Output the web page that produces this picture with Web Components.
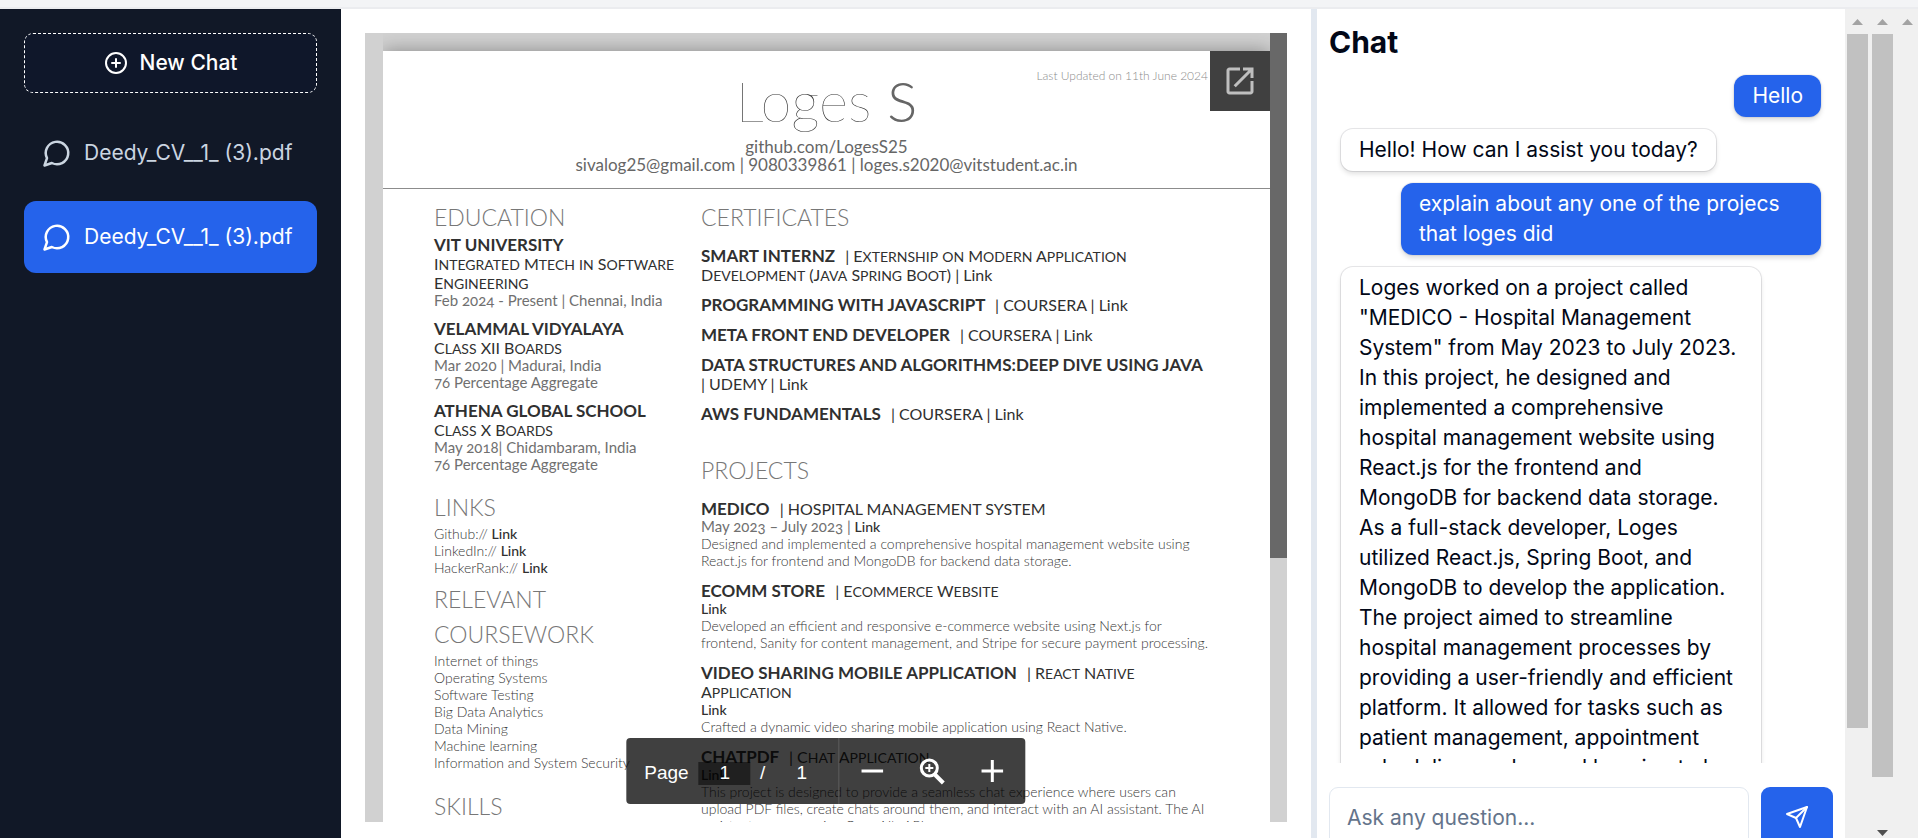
<!DOCTYPE html>
<html lang="en">
<head>
<meta charset="utf-8">
<title>ChatPDF</title>
<meta name="viewport" content="width=device-width, initial-scale=1">
<style>
  html, body { margin: 0; height: 100%; }
  body { overflow: hidden; background: #fff; color: #020817; font: 400 21px/30px Inter, "Liberation Sans", sans-serif; }
</style>
</head>
<body>
<chat-app>
  <chat-sidebar slot="sidebar">
    <chat-link href="#chat-1">Deedy_CV__1_ (3).pdf</chat-link>
    <chat-link href="#chat-2" active>Deedy_CV__1_ (3).pdf</chat-link>
  </chat-sidebar>
  <pdf-viewer slot="viewer" page="1" pages="1"><cv-page></cv-page></pdf-viewer>
  <chat-panel slot="chat">
    <chat-message from="user">Hello</chat-message>
    <chat-message>Hello! How can I assist you today?</chat-message>
    <chat-message from="user">explain about any one of the projecs that loges did</chat-message>
    <chat-message>Loges worked on a project called "MEDICO - Hospital Management System" from May 2023 to July 2023. In this project, he designed and implemented a comprehensive hospital management website using React.js for the frontend and MongoDB for backend data storage. As a full-stack developer, Loges utilized React.js, Spring Boot, and MongoDB to develop the application. The project aimed to streamline hospital management processes by providing a user-friendly and efficient platform. It allowed for tasks such as patient management, appointment scheduling, and record keeping to be</chat-message>
  </chat-panel>
  <scroll-track slot="tracks" style="--thumb: 694px"></scroll-track>
  <scroll-track slot="tracks" style="--thumb: 743px" down></scroll-track>
  <scroll-track slot="tracks" style="--thumb: 0px"></scroll-track>
</chat-app>

<script>
const define = (name, html, setup) => {
  const template = document.createElement('template');
  template.innerHTML = html;
  customElements.define(name, class extends HTMLElement {
    constructor() {
      super();
      this.attachShadow({ mode: 'open' }).append(template.content.cloneNode(true));
    }
    connectedCallback() { if (setup) setup(this, this.shadowRoot); }
  });
};

define('chat-app', `
  <style>
    :host { display: flex; flex-direction: column; height: 100vh; overflow: hidden; }
    .strip { flex: none; height: 7px; background: #f3f4f6; border-bottom: 2px solid #ebecef; }
    main { flex: 1; min-height: 0; display: flex; }
    .sidebar { flex: none; width: 341px; }
    .viewer { flex: 1; min-width: 0; padding: 24px 24px 16px; display: flex; }
    .chat { flex: none; width: 528px; border-left: 6px solid #e2e8f0; overflow: hidden; }
    .tracks { flex: none; width: 73px; display: flex; background: #f0f0f0; overflow: hidden; }
    ::slotted(pdf-viewer) { flex: 1; min-width: 0; }
    ::slotted(chat-sidebar) { height: 100%; }
  </style>
  <div class="strip"></div>
  <main>
    <div class="sidebar"><slot name="sidebar"></slot></div>
    <div class="viewer"><slot name="viewer"></slot></div>
    <div class="chat"><slot name="chat"></slot></div>
    <div class="tracks"><slot name="tracks"></slot></div>
  </main>`);

define('chat-sidebar', `
  <style>
    :host { display: block; box-sizing: border-box; padding: 24px; background: #111827; }
    button { display: flex; align-items: center; justify-content: center; gap: 12px; width: 100%; height: 60px; box-sizing: border-box;
      margin: 0 0 24px; border: 1px dashed #fff; border-radius: 9px; background: #0f172a; color: #fff; font: inherit; font-weight: 500; }
    nav { display: flex; flex-direction: column; gap: 12px; }
  </style>
  <button type="button">
    <svg width="24" height="24" viewBox="0 0 24 24" fill="none" stroke="currentColor" stroke-width="2" stroke-linecap="round" aria-hidden="true"><circle cx="12" cy="12" r="10"/><path d="M8 12h8M12 8v8"/></svg>
    New Chat
  </button>
  <nav aria-label="Chats"><slot></slot></nav>`);

define('chat-link', `
  <style>
    :host { display: block; color: #cbd5e1; border-radius: 12px; }
    :host([active]) { color: #fff; background: #2563eb; }
    a { display: flex; align-items: center; gap: 12px; height: 72px; padding: 0 18px; color: inherit; text-decoration: none; white-space: nowrap; }
    svg { flex: none; }
  </style>
  <a>
    <svg width="30" height="30" viewBox="0 0 24 24" fill="none" stroke="currentColor" stroke-width="2" stroke-linecap="round" stroke-linejoin="round" aria-hidden="true"><path d="M7.9 20A9 9 0 1 0 4 16.1L2 22Z"/></svg>
    <span><slot></slot></span>
  </a>`, (host, root) => { root.querySelector('a').href = host.getAttribute('href'); });

define('pdf-viewer', `
  <style>
    :host { display: flex; position: relative; padding-left: 18px; background: #d1d1d1; }
    .sheet { flex: 1; min-width: 0; padding-top: 18px; overflow: hidden; position: relative; }
    ::slotted(cv-page) { box-shadow: 0 0 18px rgba(0, 0, 0, .35); }
    .bar { flex: none; width: 17px; }
    .thumb { height: 66.6%; background: #686868; }
    .open { position: absolute; top: 18px; right: 17px; width: 60px; height: 60px; display: grid; place-items: center; padding: 0; border: 0; background: #404040; color: #bfbfbf; }
    .tools { position: absolute; bottom: 18px; left: 50%; transform: translateX(-50%); display: flex; height: 66px; border-radius: 4px;
      background: rgba(0, 0, 0, .75); color: #fff; font: 19px/24px "Liberation Sans", Arial, sans-serif; }
    .count { display: flex; align-items: center; padding: 4px 10px 0 18px; box-sizing: border-box; border-right: 1px solid #5c5c5c; }
    input { width: 52px; height: 23px; box-sizing: border-box; margin-left: 10px; padding: 0; border: 0; background: rgba(0, 0, 0, .5); color: #fff; font: inherit; text-align: center; }
    .sep { width: 24px; text-align: center; }
    .total { width: 54px; text-align: center; }
    .zoom { display: flex; justify-content: center; width: 186px; }
    .zoom button { width: 60px; padding: 0; display: grid; place-items: center; border: 0; background: none; color: #fff; }
  </style>
  <div class="sheet"><slot></slot></div>
  <div class="bar"><div class="thumb"></div></div>
  <button class="open" type="button" aria-label="Open in new window">
    <svg width="36" height="36" viewBox="0 0 24 24" fill="currentColor" aria-hidden="true"><path d="M19 19H5V5h7V3H5c-1.110 0-2 .9-2 2v14c0 1.100.890 2 2 2h14c1.100 0 2-.9 2-2v-7h-2v7zM14 3v2h3.590l-9.830 9.830 1.410 1.410L19 6.410V10h2V3h-7z"/></svg>
  </button>
  <div class="tools" role="toolbar" aria-label="Page tools">
    <div class="count">
      <label for="page">Page</label><input id="page" type="text">
      <span class="sep">/</span><span class="total"></span>
    </div>
    <div class="zoom">
      <button type="button" aria-label="Zoom out"><svg width="22" height="22" viewBox="0 0 22 22" aria-hidden="true"><path d="M0 11h22" stroke="currentColor" stroke-width="3"/></svg></button>
      <button type="button" aria-label="Reset zoom"><svg width="28" height="28" viewBox="0 0 28 28" fill="none" stroke="currentColor" aria-hidden="true"><circle cx="11" cy="11" r="8" stroke-width="3"/><path d="M16 17l9 9" stroke-width="4"/><path d="M7 11h8M11 7v8" stroke-width="2"/></svg></button>
      <button type="button" aria-label="Zoom in"><svg width="22" height="22" viewBox="0 0 22 22" aria-hidden="true"><path d="M0 11h22M11 0v22" stroke="currentColor" stroke-width="3"/></svg></button>
    </div>
  </div>`, (host, root) => {
    root.querySelector('input').value = host.getAttribute('page');
    root.querySelector('.total').textContent = host.getAttribute('pages');
  });

define('cv-page', `
  <style>
    :host { display: block; background: #fff; color: #303030; font: 14px/17px Lato, "Open Sans", sans-serif; min-height: 1200px; white-space: nowrap; }
    h1, h2, p, ul { margin: 0; padding: 0; list-style: none; font-weight: 400; }
    a { color: #303030; text-decoration: none; font-weight: 500; }
    header { display: grid; padding: 17px 0 14px; text-align: center; color: #666; border-bottom: 1px solid #8c8c8c; font-size: 17px; line-height: 18px; }
    .updated { grid-area: 1 / 1; padding-right: 62px; text-align: right; font-size: 12px; line-height: 16px; font-weight: 300; color: #8c8c8c; }
    h1 { grid-area: 1 / 1; margin: 3px 0 7px; font-size: 56px; line-height: 60px; font-weight: 100; color: #333; }
    h1 b { font-weight: 300; color: #666; }
    .cols { display: grid; grid-template-columns: 242px 1fr; gap: 25px; padding: 11px 50px 0 51px; }
    h2 { font-size: 23px; line-height: 35px; font-weight: 300; color: #777; }
    .t { font-size: 17px; line-height: 19px; font-weight: 700; }
    .t span { font-weight: 400; font-size: 16px; margin-left: 6px; }
    .t .cont { margin-left: 0; }
    .t span, .t small, .sc small { line-height: 0; }
    .t a, .u a { font-weight: 400; }
    .sc { font-size: 16px; line-height: 19px; }
    .sc small { font-size: 14px; text-transform: uppercase; }
    .t a, .u { font-size: 16px; line-height: 19px; }
    .t a { line-height: 0; }
    .d { font-size: 15px; color: #707070; font-variant-numeric: oldstyle-nums; }
    .x { font-weight: 300; color: #383838; }
    .x a, .d a { font-size: 14px; }
    .list { display: grid; gap: 10px; }
    .certs { display: grid; gap: 11px; margin: 11px 0 30px; }
    .projects { display: grid; gap: 12px; margin-top: 11px; }
    .links { margin-top: 17px; } .course { margin-top: 6px; } .skills { margin-top: 18px; }
  </style>
  <header>
    <p class="updated">Last Updated on 11th June 2024</p>
    <h1>Loges <b>S</b></h1>
    <p>github.com/LogesS25</p>
    <p>sivalog25@gmail.com | 9080339861 | loges.s2020@vitstudent.ac.in</p>
  </header>
  <div class="cols">
    <div>
      <section>
        <h2>EDUCATION</h2>
        <div class="list">
          <div><p class="t">VIT UNIVERSITY</p><p class="sc">Integrated Mtech in Software<br>Engineering</p><p class="d">Feb 2024 - Present | Chennai, India</p></div>
          <div><p class="t">VELAMMAL VIDYALAYA</p><p class="sc">Class XII Boards</p><p class="d">Mar 2020 | Madurai, India<br>76 Percentage Aggregate</p></div>
          <div><p class="t">ATHENA GLOBAL SCHOOL</p><p class="sc">Class X Boards</p><p class="d">May 2018| Chidambaram, India<br>76 Percentage Aggregate</p></div>
        </div>
      </section>
      <section class="links"><h2>LINKS</h2>
        <ul class="x"><li>Github:// <a href="#github">Link</a></li><li>LinkedIn:// <a href="#linkedin">Link</a></li><li>HackerRank:// <a href="#hackerrank">Link</a></li></ul>
      </section>
      <section class="course"><h2>RELEVANT<br>COURSEWORK</h2>
        <ul class="x"><li>Internet of things</li><li>Operating Systems</li><li>Software Testing</li><li>Big Data Analytics</li><li>Data Mining</li><li>Machine learning</li><li>Information and System Security</li></ul>
      </section>
      <section class="skills"><h2>SKILLS</h2></section>
    </div>
    <div>
      <section><h2>CERTIFICATES</h2>
        <div class="certs">
          <p class="t">SMART INTERNZ <span class="sc">| Externship on Modern Application</span><br><span class="sc cont">Development (Java Spring Boot) |</span> <a href="#c1">Link</a></p>
          <p class="t">PROGRAMMING WITH JAVASCRIPT <span>| COURSERA | <a href="#c2">Link</a></span></p>
          <p class="t">META FRONT END DEVELOPER <span>| COURSERA | <a href="#c3">Link</a></span></p>
          <div><p class="t">DATA STRUCTURES AND ALGORITHMS:DEEP DIVE USING JAVA</p><p class="u">| UDEMY | <a href="#c4">Link</a></p></div>
          <p class="t">AWS FUNDAMENTALS <span>| COURSERA | <a href="#c5">Link</a></span></p>
        </div>
      </section>
      <section><h2>PROJECTS</h2>
        <div class="projects">
          <div><p class="t">MEDICO <span>| HOSPITAL MANAGEMENT SYSTEM</span></p><p class="d">May 2023 – July 2023 | <a href="#p1">Link</a></p>
            <p class="x">Designed and implemented a comprehensive hospital management website using<br>React.js for frontend and MongoDB for backend data storage.</p></div>
          <div><p class="t">ECOMM STORE <span class="sc">| Ecommerce Website</span></p><p class="x"><a href="#p2">Link</a><br>Developed an efficient and responsive e-commerce website using Next.js for<br>frontend, Sanity for content management, and Stripe for secure payment processing.</p></div>
          <div><p class="t">VIDEO SHARING MOBILE APPLICATION <span class="sc">| React Native</span></p><p class="sc">Application</p><p class="x"><a href="#p3">Link</a><br>Crafted a dynamic video sharing mobile application using React Native.</p></div>
          <div><p class="t">CHATPDF <span class="sc">| Chat Application</span></p><p class="x"><a href="#p4">Link</a><br>This project is designed to provide a seamless chat experience where users can<br>upload PDF files, create chats around them, and interact with an AI assistant. The AI<br>assistant answers using OpenAI's API</p></div>
        </div>
      </section>
    </div>
  </div>`, (host, root) => {
    // Small caps: lower-case runs are drawn as smaller capitals.
    for (const el of root.querySelectorAll('.sc')) {
      el.innerHTML = el.innerHTML.replace(/(<[^>]*>)|([a-z]+)/g, (m, tag, run) => tag || '<small>' + run + '</small>');
    }
  });

define('chat-panel', `
  <style>
    :host { display: flex; flex-direction: column; box-sizing: border-box; height: calc(100% + 33px); padding-bottom: 24px; }
    h2 { flex: none; margin: 12px 12px 0; font-size: 30px; line-height: 42px; font-weight: 700; }
    .log { flex: 1; min-height: 0; overflow: hidden; display: flex; flex-direction: column; gap: 12px; padding: 12px 24px 0; }
    ::slotted(*) { flex: none; }
    form { flex: none; display: flex; gap: 12px; margin: 24px 12px 0; }
    input { flex: 1; min-width: 0; height: 60px; box-sizing: border-box; padding: 0 17px; border: 1px solid #e2e8f0; border-radius: 9px; background: #fff; color: inherit; font: inherit; }
    input::placeholder { color: #64748b; opacity: 1; }
    button { flex: none; width: 72px; height: 60px; display: grid; place-items: center; padding: 0; border: 0; border-radius: 9px; background: #2563eb; color: #fff; }
  </style>
  <h2>Chat</h2>
  <div class="log"><slot></slot></div>
  <form>
    <input type="text" placeholder="Ask any question..." aria-label="Ask any question">
    <button type="button" aria-label="Send"><svg width="24" height="24" viewBox="0 0 24 24" fill="none" stroke="currentColor" stroke-width="2" stroke-linecap="round" stroke-linejoin="round" aria-hidden="true"><path d="m22 2-7 20-4-9-9-4Z"/><path d="M22 2 11 13"/></svg></button>
  </form>`);

define('chat-message', `
  <style>
    :host { display: flex; justify-content: flex-start; padding-right: 60px; }
    :host([from=user]) { justify-content: flex-end; padding: 0 0 0 60px; }
    p { margin: 0; padding: 6px 18px; border-radius: 12px; background: #fff;
      box-shadow: 0 0 0 1px rgba(17, 24, 39, .1), 0 3px 5px rgba(0, 0, 0, .12); }
    :host([from=user]) p { background: #2563eb; color: #fff; box-shadow: 0 0 0 1px rgba(17, 24, 39, .05), 0 3px 5px rgba(0, 0, 0, .14); }
  </style>
  <p><slot></slot></p>`);

define('scroll-track', `
  <style>
    :host { flex: none; display: flex; flex-direction: column; align-items: center; width: 25px; color: #a3a3a3; }
    svg { flex: none; display: block; }
    .up { margin: 10px 0 9px; }
    .thumb { flex: none; width: 21px; height: var(--thumb); background: #c1c1c1; }
    .down { display: none; margin: auto 0 2px; color: #505050; }
    :host([down]) .down { display: block; }
  </style>
  <svg class="up" width="11" height="6" viewBox="0 0 11 6" aria-hidden="true"><path d="M0 6 5.500 0 11 6z" fill="currentColor"/></svg>
  <div class="thumb"></div>
  <svg class="down" width="11" height="6" viewBox="0 0 11 6" aria-hidden="true"><path d="M0 0 5.500 6 11 0z" fill="currentColor"/></svg>`);
</script>
</body>
</html>
